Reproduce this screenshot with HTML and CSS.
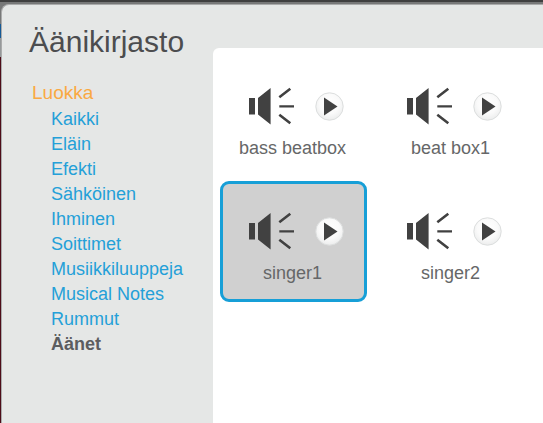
FILE: index.html
```
<!DOCTYPE html>
<html lang="fi">
<head>
<meta charset="utf-8">
<title>Äänikirjasto</title>
<link rel="stylesheet" href="styles.css">
</head>
<body>
<svg class="defs" width="0" height="0" aria-hidden="true">
  <defs>
    <radialGradient id="knob" cx="50%" cy="40%" r="60%">
      <stop offset="0" stop-color="#fff"/>
      <stop offset=".6" stop-color="#fafafa"/>
      <stop offset="1" stop-color="#eceded"/>
    </radialGradient>
    <symbol id="sound" viewBox="0 0 100 40">
      <path fill="#414141" d="M1 12h6v16.500H1zM10 12L22.600 2v36.500L10 28.500z"/>
      <path fill="none" stroke="#414141" stroke-width="2.300" d="M31.300 20.300h14.700"/>
      <path fill="none" stroke="#414141" stroke-width="2.600" d="M31.300 11.200L42.300 2.800M31.300 28.700L42.300 37.300"/>
      <circle cx="81.500" cy="20.500" r="13.700" fill="url(#knob)" stroke="#dcdede"/>
      <path fill="#414141" d="M76 11.500L89.500 20.500L76 29.500z"/>
    </symbol>
  </defs>
</svg>
<main class="dialog">
  <aside class="sidebar">
    <h1 class="title">Äänikirjasto</h1>
    <h2 class="heading">Luokka</h2>
    <ul class="categories">
      <li>Kaikki</li>
      <li>Eläin</li>
      <li>Efekti</li>
      <li>Sähköinen</li>
      <li>Ihminen</li>
      <li>Soittimet</li>
      <li>Musiikkiluuppeja</li>
      <li>Musical Notes</li>
      <li>Rummut</li>
      <li class="current">Äänet</li>
    </ul>
  </aside>
  <section class="sounds">
    <div class="card"><svg class="icon"><use href="#sound"/></svg><span>bass beatbox</span></div>
    <div class="card"><svg class="icon"><use href="#sound"/></svg><span>beat box1</span></div>
    <div class="card selected"><svg class="icon"><use href="#sound"/></svg><span>singer1</span></div>
    <div class="card"><svg class="icon"><use href="#sound"/></svg><span>singer2</span></div>
  </section>
</main>
</body>
</html>
```
FILE: styles.css
```
* { box-sizing: border-box; }
body {
  margin: 0;
  height: 423px;
  padding: 4px 0 0 1px;
  overflow: hidden;
  font-family: "Liberation Sans", Arial, sans-serif;
  background:
    linear-gradient(#3f4040 2px, transparent 2px),
    linear-gradient(#777878 24px, #155a96 24px, #155a96 38px, #96999a 38px, #96999a 57px, #4d0c18 57px);
}
.defs { display: block; }
.dialog {
  display: flex;
  height: 430px;
  border: solid #aaabab;
  border-width: 1px 0 0 1px;
  border-radius: 8px 0 0 0;
  background: #e5e7e6;
  overflow: hidden;
}
.sidebar { width: 211px; flex: none; }
.title {
  margin: 19px 0 0 27px;
  font-size: 30px;
  line-height: 36px;
  font-weight: 400;
  color: #4c4d4f;
}
.heading {
  margin: 21px 0 0 30px;
  font-size: 19px;
  line-height: 24px;
  font-weight: 400;
  color: #faa943;
}
.categories {
  margin: 2px 0 0 49px;
  padding: 0;
  list-style: none;
  font-size: 18px;
  line-height: 25px;
  color: #24a0d8;
}
.current { font-weight: 700; color: #5c5d5f; }
.sounds {
  flex: 1;
  margin-top: 43px;
  padding: 8px 0 0 7px;
  display: grid;
  grid-template-columns: 147px 147px;
  grid-auto-rows: 121px;
  align-content: start;
  gap: 4px 11px;
  background: #fff;
  border-radius: 6px 0 0 0;
}
.card {
  display: flex;
  flex-direction: column;
  align-items: center;
  padding-top: 27px;
  border: 3px solid transparent;
  border-radius: 9px;
  font-size: 18px;
  line-height: 24px;
  color: #666768;
}
.icon { width: 100px; height: 40px; margin-left: 8px; flex: none; }
.card span { margin-top: 10px; margin-left: -2px; }
.selected { background: #d0d0d0; border-color: #179fd7; }
```
